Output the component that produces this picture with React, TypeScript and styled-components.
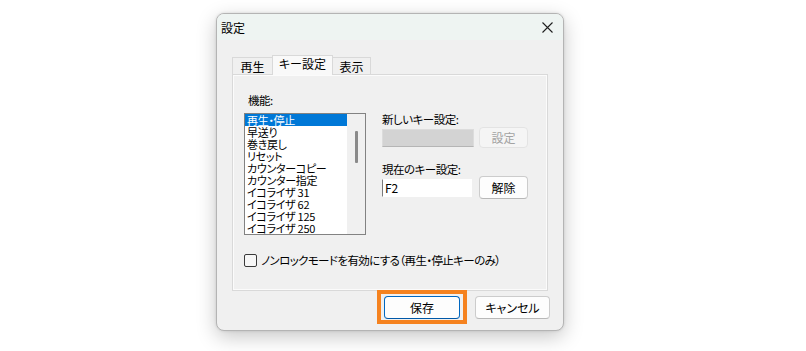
import React from "react";
import styled, { createGlobalStyle } from "styled-components";

const GlobalStyle = createGlobalStyle`
  html, body { margin: 0; padding: 0; background: #ffffff; }
  body {
    font-family: "Noto Sans CJK JP", "Noto Sans", sans-serif;
    color: #000;
    font-feature-settings: "palt";
  }
`;

const Stage = styled.div`
  width: 806px;
  height: 351px;
  box-sizing: border-box;
  padding: 13px 0 0 216px;
`;

const Dialog = styled.div`
  width: 348px;
  height: 318px;
  box-sizing: border-box;
  border: 1px solid #b4b4b4;
  border-radius: 8px;
  background: #f0f0f0;
  box-shadow: 0 6px 20px rgba(0, 0, 0, 0.22), 0 0 3px rgba(0, 0, 0, 0.12);
  overflow: hidden;
  display: flex;
  flex-direction: column;
`;

const TitleBar = styled.div`
  height: 26px;
  flex: none;
  background: #eef4f2;
  display: flex;
  align-items: center;
  justify-content: space-between;
  padding: 0 10px 0 4px;
  font-size: 12px;
`;

const CloseIcon = () => (
  <svg width="11" height="11" viewBox="0 0 11 11">
    <path d="M0.5 0.5 L10.5 10.5 M10.5 0.5 L0.5 10.5" stroke="#1f1f1f" strokeWidth="1.1" fill="none" />
  </svg>
);

const Client = styled.div`
  flex: 1;
  display: flex;
  flex-direction: column;
  padding: 16px 14px 0 15px;
`;

const TabRow = styled.div`
  display: flex;
  align-items: flex-end;
  height: 19px;
  position: relative;
  z-index: 1;
  margin-bottom: -1px;
`;

const Tab = styled.div<{ $active?: boolean; $w: number }>`
  width: ${(p) => p.$w}px;
  height: ${(p) => (p.$active ? 20 : 18)}px;
  box-sizing: border-box;
  border: 1px solid #d9d9d9;
  border-bottom: ${(p) => (p.$active ? "none" : "1px solid #d9d9d9")};
  background: ${(p) => (p.$active ? "#f9f9f9" : "#f0f0f0")};
  font-size: 12px;
  line-height: ${(p) => (p.$active ? 16 : 18)}px;
  text-align: center;
  margin-left: ${(p) => (p.$active ? -1 : 0)}px;
  margin-right: ${(p) => (p.$active ? -1 : 0)}px;
  z-index: ${(p) => (p.$active ? 2 : 1)};
`;

const Panel = styled.div`
  width: 316px;
  height: 217px;
  box-sizing: border-box;
  border: 1px solid #d9d9d9;
  box-shadow: inset 0 0 0 1px #fbfbfb;
  background: #f0f0f0;
  padding: 18px 0 0 11px;
  display: flex;
  flex-direction: column;
`;

const TopGrid = styled.div`
  display: grid;
  grid-template-columns: 122px 146px;
  grid-template-rows: 14px auto;
  column-gap: 16px;
  row-gap: 6px;
`;

const Label = styled.div<{ $indent?: number; $top?: number }>`
  font-size: 11.5px;
  letter-spacing: -0.5px;
  line-height: 14px;
  height: 14px;
  padding-left: ${(p) => p.$indent ?? 0}px;
  margin-top: ${(p) => p.$top ?? 0}px;
  white-space: nowrap;
`;

const ListBox = styled.div`
  width: 122px;
  height: 122px;
  box-sizing: border-box;
  border: 1px solid #828282;
  background: #ffffff;
  display: flex;
`;

const Items = styled.div`
  flex: 1;
  display: flex;
  flex-direction: column;
  overflow: hidden;
`;

const Item = styled.div<{ $selected?: boolean }>`
  height: 12px;
  line-height: 12px;
  font-size: 11px;
  letter-spacing: -0.3px;
  padding-left: 2px;
  white-space: nowrap;
  background: ${(p) => (p.$selected ? "#0078d7" : "transparent")};
  color: ${(p) => (p.$selected ? "#ffffff" : "#000000")};
`;

const ScrollTrack = styled.div`
  width: 18px;
  background: #f0f0f0;
  display: flex;
  justify-content: center;
  padding-top: 17px;
  box-sizing: border-box;
`;

const Thumb = styled.div`
  width: 3px;
  height: 32px;
  border-radius: 1px;
  background: #8a8a8a;
`;

const RightCol = styled.div`
  grid-column: 2;
  grid-row: 2;
  display: flex;
  flex-direction: column;
  margin-top: -1px;
`;

const FieldRow = styled.div<{ $top: number }>`
  display: flex;
  align-items: center;
  justify-content: space-between;
  margin-top: ${(p) => p.$top}px;
`;

const KeyBox = styled.div<{ $disabled?: boolean; $w: number }>`
  width: ${(p) => p.$w}px;
  height: 18px;
  box-sizing: border-box;
  background: ${(p) => (p.$disabled ? "#d3d3d3" : "#ffffff")};
  border: 1px solid ${(p) => (p.$disabled ? "#dcdcdc" : "#ffffff")};
  border-left-color: ${(p) => (p.$disabled ? "#dcdcdc" : "#7a7a7a")};
  border-bottom-color: ${(p) => (p.$disabled ? "#b5b5b5" : "#ffffff")};
  font-size: 12px;
  line-height: 16px;
  padding-left: 2px;
`;

const Button = styled.div<{ $w: number; $h?: number; $disabled?: boolean; $primary?: boolean }>`
  width: ${(p) => p.$w}px;
  height: ${(p) => p.$h ?? 23}px;
  box-sizing: border-box;
  border: 1px solid ${(p) => (p.$primary ? "#0067c0" : p.$disabled ? "#e3e3e3" : "#cccccc")};
  border-bottom-color: ${(p) => (p.$primary ? "#0058a8" : p.$disabled ? "#e3e3e3" : "#b8b8b8")};
  border-radius: 4px;
  background: ${(p) => (p.$disabled ? "#f5f5f5" : "#fdfdfd")};
  color: ${(p) => (p.$disabled ? "#a3a3a3" : "#000000")};
  font-size: 12px;
  display: flex;
  align-items: center;
  justify-content: center;
`;

const CheckRow = styled.label`
  display: flex;
  align-items: center;
  gap: 4px;
  margin-top: 17px;
  font-size: 11.5px;
  letter-spacing: -0.6px;
  white-space: nowrap;
`;

const CheckBox = styled.span`
  width: 13px;
  height: 13px;
  box-sizing: border-box;
  border: 1px solid #3a3a3a;
  border-radius: 2px;
  background: #f7f7f7;
  flex: none;
`;

const Footer = styled.div`
  display: flex;
  justify-content: flex-end;
  align-items: center;
  gap: 8px;
  margin-top: -1px;
  margin-right: -1px;
`;

const Highlight = styled.div`
  border: 4px solid #f5821f;
  padding: 2px 3px 1px 3px;
`;

const items = [
  "再生・停止",
  "早送り",
  "巻き戻し",
  "リセット",
  "カウンターコピー",
  "カウンター指定",
  "イコライザ 31",
  "イコライザ 62",
  "イコライザ 125",
  "イコライザ 250",
];

export default function App() {
  return (
    <>
      <GlobalStyle />
      <Stage>
        <Dialog>
          <TitleBar>
            <span>設定</span>
            <CloseIcon />
          </TitleBar>
          <Client>
            <TabRow>
              <Tab $w={41}>再生</Tab>
              <Tab $w={61} $active>キー設定</Tab>
              <Tab $w={39}>表示</Tab>
            </TabRow>
            <Panel>
              <TopGrid>
                <Label $indent={4}>機能:</Label>
                <div />
                <ListBox>
                  <Items>
                    {items.map((t, i) => (
                      <Item key={t} $selected={i === 0}>
                        {t}
                      </Item>
                    ))}
                  </Items>
                  <ScrollTrack>
                    <Thumb />
                  </ScrollTrack>
                </ListBox>
                <RightCol>
                  <Label>新しいキー設定:</Label>
                  <FieldRow $top={1}>
                    <KeyBox $disabled $w={92} />
                    <Button $w={49} $h={21} $disabled>
                      設定
                    </Button>
                  </FieldRow>
                  <Label $top={14}>現在のキー設定:</Label>
                  <FieldRow $top={0}>
                    <KeyBox $w={90}>F2</KeyBox>
                    <Button $w={49}>解除</Button>
                  </FieldRow>
                </RightCol>
              </TopGrid>
              <CheckRow>
                <CheckBox />
                <span>ノンロックモードを有効にする（再生・停止キーのみ）</span>
              </CheckRow>
            </Panel>
            <Footer>
              <Highlight>
                <Button $w={76} $primary>
                  保存
                </Button>
              </Highlight>
              <Button $w={75}>キャンセル</Button>
            </Footer>
          </Client>
        </Dialog>
      </Stage>
    </>
  );
}
